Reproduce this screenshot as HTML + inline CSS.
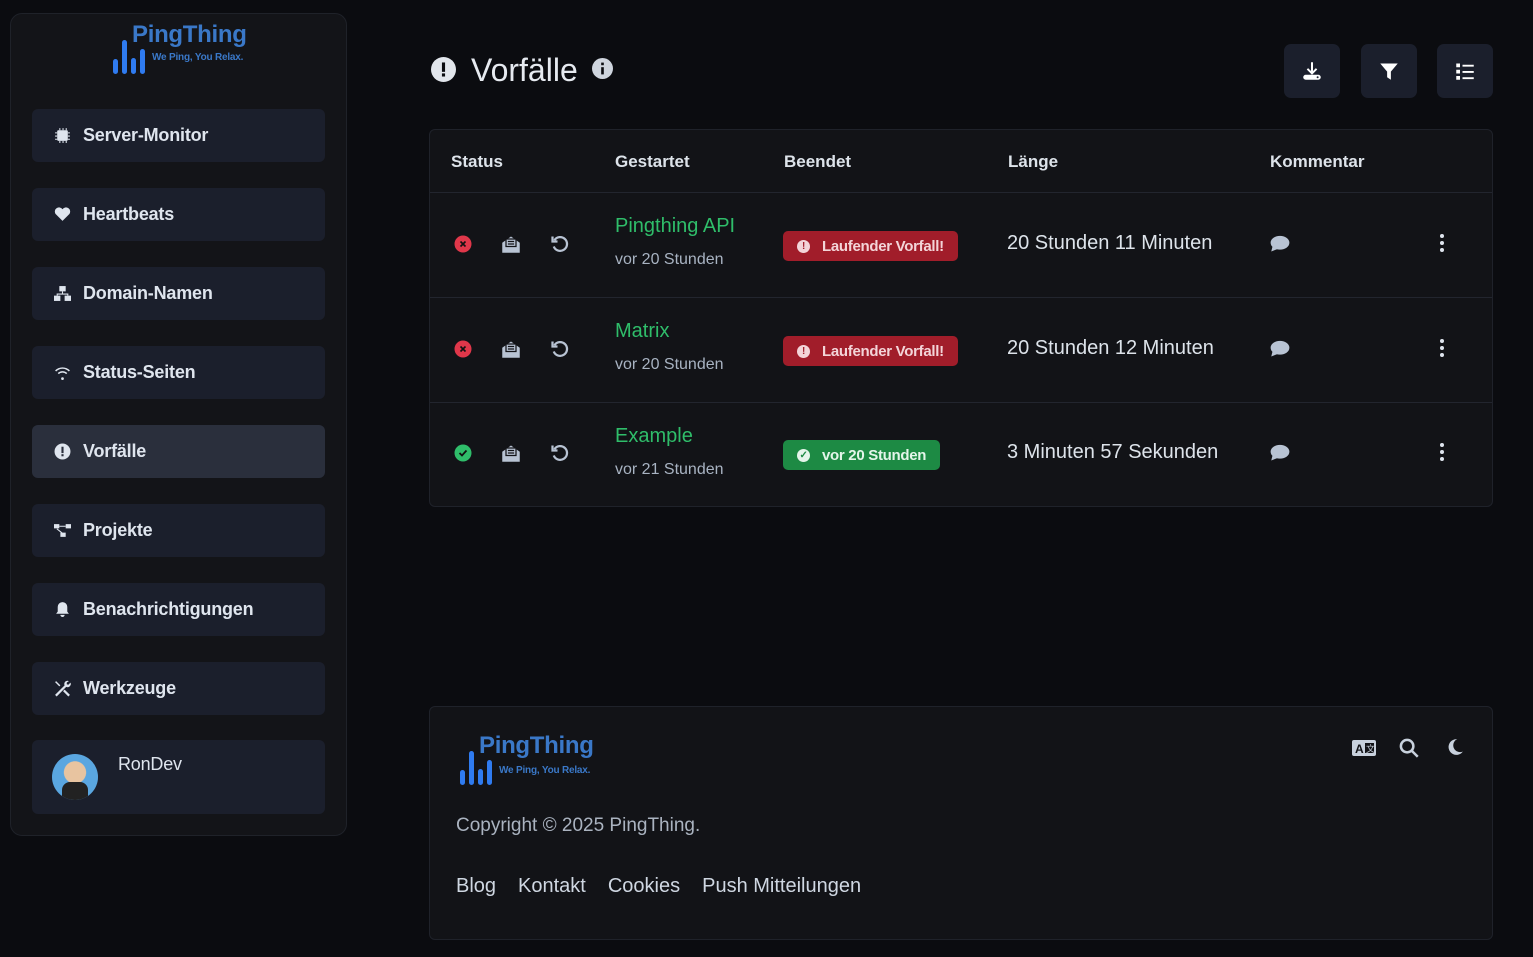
<!DOCTYPE html>
<html><head><meta charset="utf-8"><style>
*{box-sizing:border-box;margin:0;padding:0}
body{width:1533px;height:957px;background:#0b0c10;font-family:"Liberation Sans",sans-serif;color:#dde3ea;position:relative;overflow:hidden}
.side{position:absolute;left:10px;top:13px;width:337px;height:823px;background:#131418;border:1px solid #1f2229;border-radius:12px}
.logo{position:absolute}
.logo .bar{position:absolute;bottom:0;width:5px;border-radius:3px;background:#2f7bf0}
.logo .t{position:absolute;color:#3a78c8;font-weight:bold;letter-spacing:-0.3px}
.logo .s{position:absolute;color:#3a78c8;font-weight:bold;white-space:nowrap;letter-spacing:-0.2px}
.nav{position:absolute;left:21px;width:293px;height:53px;background:#1b1f2c;border-radius:6px;display:flex;align-items:center;padding-left:22px;font-size:18px;font-weight:bold;color:#dfe5ee;letter-spacing:-0.2px}
.nav.act{background:#2a2f3c}
.nav svg{width:17px;height:17px;margin-right:12px;fill:#dfe5ee}
.btn{position:absolute;top:44px;width:56px;height:54px;background:#1b1f2c;border-radius:7px;display:flex;align-items:center;justify-content:center}
.table{position:absolute;left:429px;top:129px;width:1064px;height:378px;background:#121317;border:1px solid #1f222a;border-radius:6px}
.th{position:absolute;top:22px;font-weight:bold;font-size:17px}
.row{position:absolute;left:0;width:1062px;height:105px;border-top:1px solid #22252e}
.row>*{position:absolute}
.name{left:185px;top:22px;color:#2fbd6a;font-size:20px}
.ago{left:185px;top:58px;color:#a8b3c2;font-size:16px}
.badge{left:353px;top:38px;height:30px;border-radius:5px;background:#a11d2a;color:#f3d4d8;font-weight:bold;font-size:15px;display:flex;align-items:center;padding:0 14px;letter-spacing:-0.3px}
.badge.g{background:#1d8a44;color:#e4f5ea}
.badge i{display:inline-flex;align-items:center;justify-content:center;width:13px;height:13px;border-radius:50%;background:#f3d4d8;margin-right:12px;font-style:normal;font-size:10px;color:#a11d2a}
.dur{left:577px;top:39px;font-size:20px}
.foot{position:absolute;left:429px;top:706px;width:1064px;height:234px;background:#121317;border:1px solid #1f222a;border-radius:6px}
</style></head><body>
<div class="side">
 <div class="logo" style="left:102px;top:6px;width:140px;height:55px">
  <div class="bar" style="left:0;height:15px;bottom:1px"></div>
  <div class="bar" style="left:9px;height:34px;bottom:1px"></div>
  <div class="bar" style="left:18px;height:16px;bottom:1px"></div>
  <div class="bar" style="left:27px;height:25px;bottom:1px"></div>
  <div class="t" style="left:19px;top:1px;font-size:24px">PingThing</div>
  <div class="s" style="left:39px;top:32px;font-size:10px">We Ping, You Relax.</div>
 </div>
 <div class="nav" style="top:95px"><svg viewBox="0 0 16 16"><rect x="3" y="3" width="10" height="10" rx="1"/><path d="M5 1h1v2H5zM8 1h1v2H8zM11 1h1v2h-1zM5 13h1v2H5zM8 13h1v2H8zM11 13h1v2h-1zM1 5h2v1H1zM1 8h2v1H1zM1 11h2v1H1zM13 5h2v1h-2zM13 8h2v1h-2zM13 11h2v1h-2z"/></svg>Server-Monitor</div>
 <div class="nav" style="top:174px"><svg viewBox="0 0 16 16"><path d="M8 14L1.5 7.5A3.5 3.5 0 0 1 8 3a3.5 3.5 0 0 1 6.5 4.5z"/></svg>Heartbeats</div>
 <div class="nav" style="top:253px"><svg viewBox="0 0 16 16"><rect x="5" y="1" width="6" height="5"/><rect x="0" y="10" width="6" height="5"/><rect x="10" y="10" width="6" height="5"/><path d="M7.5 6h1v2h5v2h-1V9h-9v1h-1V8h5z"/></svg>Domain-Namen</div>
 <div class="nav" style="top:332px"><svg viewBox="0 0 16 16"><path d="M8 12.5a1.3 1.3 0 1 1 0 2.6 1.3 1.3 0 0 1 0-2.6zM1 6a10 10 0 0 1 14 0l-1 1A8.5 8.5 0 0 0 2 7zM3.5 8.5a6.5 6.5 0 0 1 9 0l-1 1a5 5 0 0 0-7 0z"/></svg>Status-Seiten</div>
 <div class="nav act" style="top:411px"><svg viewBox="0 0 16 16"><circle cx="8" cy="8" r="7.5"/><rect x="7" y="3.5" width="2" height="6" fill="#2a2f3c"/><rect x="7" y="10.5" width="2" height="2" fill="#2a2f3c"/></svg>Vorfälle</div>
 <div class="nav" style="top:490px"><svg viewBox="0 0 16 16"><rect x="0" y="2" width="5" height="4"/><rect x="11" y="2" width="5" height="4"/><rect x="6" y="10" width="5" height="4"/><path d="M5 3.5h6v1H5zM3 6l5 4-.6.8-5-4z"/></svg>Projekte</div>
 <div class="nav" style="top:569px"><svg viewBox="0 0 16 16"><path d="M8 1a4.5 4.5 0 0 1 4.5 4.5V10l1.5 2H2l1.5-2V5.5A4.5 4.5 0 0 1 8 1zM6 13h4a2 2 0 0 1-4 0z"/></svg>Benachrichtigungen</div>
 <div class="nav" style="top:648px"><svg viewBox="0 0 16 16"><path d="M2 1l4 4-1 1-4-4zM10 9l5 5-1.5 1.5-5-5zM14 1a3 3 0 0 0-4 4L1 14l1.5 1.5L11.5 6.5a3 3 0 0 0 4-4L13.5 4.5 12 4V2.5z"/></svg>Werkzeuge</div>
 <div class="nav" style="top:726px;height:74px;align-items:flex-start;padding-top:14px">
  <div style="position:absolute;left:20px;top:14px;width:46px;height:46px;border-radius:50%;overflow:hidden;background:radial-gradient(circle at 50% 40%,#e8c4a0 0 30%,#5aa6e0 32%)"><div style="position:absolute;left:10px;top:28px;width:26px;height:20px;background:#222;border-radius:8px 8px 0 0"></div></div>
  <span style="margin-left:64px;font-weight:normal">RonDev</span></div>
</div>

<svg style="position:absolute;left:431px;top:57px" width="25" height="25" viewBox="0 0 16 16"><circle cx="8" cy="8" r="8" fill="#e2e6ec"/><rect x="7" y="3.5" width="2" height="6" fill="#0b0c10"/><rect x="7" y="10.5" width="2" height="2" fill="#0b0c10"/></svg>
<div style="position:absolute;left:471px;top:52px;font-size:32px;color:#e6eaf0">Vorfälle</div>
<svg style="position:absolute;left:592px;top:58px" width="21" height="21" viewBox="0 0 16 16"><circle cx="8" cy="8" r="8" fill="#cfd5de"/><rect x="7" y="7" width="2" height="5.5" fill="#0b0c10"/><rect x="7" y="3.5" width="2" height="2" fill="#0b0c10"/></svg>

<div class="btn" style="left:1284px"><svg width="20" height="20" viewBox="0 0 16 16" fill="#fff"><path d="M7.2 1h1.6v7l2.3-2.3 1.1 1.1L8 11 3.8 6.8l1.1-1.1L7.2 8z"/><rect x="1" y="11" width="14" height="4" rx="2"/><circle cx="12.5" cy="13" r=".8" fill="#1b1f2c"/></svg></div>
<div class="btn" style="left:1361px"><svg width="20" height="20" viewBox="0 0 16 16" fill="#fff"><path d="M1 2h14l-5.5 6.5V15l-3-2V8.5z"/></svg></div>
<div class="btn" style="left:1437px"><svg width="20" height="20" viewBox="0 0 16 16" fill="#fff"><rect x="1" y="2" width="3" height="3"/><rect x="1" y="7" width="3" height="3"/><rect x="1" y="12" width="3" height="3"/><rect x="6" y="3" width="9" height="1.5"/><rect x="6" y="8" width="9" height="1.5"/><rect x="6" y="13" width="9" height="1.5"/></svg></div>

<div class="table">
 <div class="th" style="left:21px">Status</div>
 <div class="th" style="left:185px">Gestartet</div>
 <div class="th" style="left:354px">Beendet</div>
 <div class="th" style="left:578px">Länge</div>
 <div class="th" style="left:840px">Kommentar</div>
 <div class="row" style="top:62px">
  <svg style="left:24px;top:42px" width="18" height="18"><circle cx="9" cy="9" r="8.5" fill="#e0374a"/><path d="M6.5 6.5l5 5M11.5 6.5l-5 5" stroke="#111" stroke-width="1.6"/></svg>
  <svg style="left:71px;top:41px" width="20" height="20" viewBox="0 0 16 16" fill="#b8c3d3"><path d="M1 7l7-5 7 5v8H1z"/><rect x="4" y="4" width="8" height="6" stroke="#121317"/><path d="M5.5 6h5M5.5 8h5" stroke="#121317"/></svg>
  <svg style="left:120px;top:41px" width="20" height="20" viewBox="0 0 16 16" fill="none" stroke="#b8c3d3" stroke-width="1.8"><path d="M3.5 5A5.5 5.5 0 1 1 3 10"/><path d="M2 2v4h4"/></svg>
  <div class="name">Pingthing API</div><div class="ago">vor 20 Stunden</div>
  <div class="badge"><i>!</i>Laufender Vorfall!</div>
  <div class="dur">20 Stunden 11 Minuten</div>
  <svg style="left:840px;top:42px" width="20" height="18" viewBox="0 0 16 14" fill="#b8c3d3"><ellipse cx="8" cy="6" rx="7.5" ry="5.5"/><path d="M2 9L1 13 6 11z"/></svg>
  <svg style="left:1008px;top:40px" width="8" height="20"><circle cx="4" cy="3" r="2" fill="#dfe5ee"/><circle cx="4" cy="10" r="2" fill="#dfe5ee"/><circle cx="4" cy="17" r="2" fill="#dfe5ee"/></svg>
 </div>
 <div class="row" style="top:167px">
  <svg style="left:24px;top:42px" width="18" height="18"><circle cx="9" cy="9" r="8.5" fill="#e0374a"/><path d="M6.5 6.5l5 5M11.5 6.5l-5 5" stroke="#111" stroke-width="1.6"/></svg>
  <svg style="left:71px;top:41px" width="20" height="20" viewBox="0 0 16 16" fill="#b8c3d3"><path d="M1 7l7-5 7 5v8H1z"/><rect x="4" y="4" width="8" height="6" stroke="#121317"/><path d="M5.5 6h5M5.5 8h5" stroke="#121317"/></svg>
  <svg style="left:120px;top:41px" width="20" height="20" viewBox="0 0 16 16" fill="none" stroke="#b8c3d3" stroke-width="1.8"><path d="M3.5 5A5.5 5.5 0 1 1 3 10"/><path d="M2 2v4h4"/></svg>
  <div class="name">Matrix</div><div class="ago">vor 20 Stunden</div>
  <div class="badge"><i>!</i>Laufender Vorfall!</div>
  <div class="dur">20 Stunden 12 Minuten</div>
  <svg style="left:840px;top:42px" width="20" height="18" viewBox="0 0 16 14" fill="#b8c3d3"><ellipse cx="8" cy="6" rx="7.5" ry="5.5"/><path d="M2 9L1 13 6 11z"/></svg>
  <svg style="left:1008px;top:40px" width="8" height="20"><circle cx="4" cy="3" r="2" fill="#dfe5ee"/><circle cx="4" cy="10" r="2" fill="#dfe5ee"/><circle cx="4" cy="17" r="2" fill="#dfe5ee"/></svg>
 </div>
 <div class="row" style="top:272px">
  <svg style="left:24px;top:41px" width="18" height="18"><circle cx="9" cy="9" r="8.5" fill="#2fbd6a"/><path d="M5.5 9l2.5 2.5 4.5-5" stroke="#111" stroke-width="1.8" fill="none"/></svg>
  <svg style="left:71px;top:40px" width="20" height="20" viewBox="0 0 16 16" fill="#b8c3d3"><path d="M1 7l7-5 7 5v8H1z"/><rect x="4" y="4" width="8" height="6" stroke="#121317"/><path d="M5.5 6h5M5.5 8h5" stroke="#121317"/></svg>
  <svg style="left:120px;top:40px" width="20" height="20" viewBox="0 0 16 16" fill="none" stroke="#b8c3d3" stroke-width="1.8"><path d="M3.5 5A5.5 5.5 0 1 1 3 10"/><path d="M2 2v4h4"/></svg>
  <div class="name">Example</div><div class="ago">vor 21 Stunden</div>
  <div class="badge g" style="top:37px"><i style="background:#e4f5ea;color:#1d8a44">✓</i>vor 20 Stunden</div>
  <div class="dur" style="top:38px">3 Minuten 57 Sekunden</div>
  <svg style="left:840px;top:41px" width="20" height="18" viewBox="0 0 16 14" fill="#b8c3d3"><ellipse cx="8" cy="6" rx="7.5" ry="5.5"/><path d="M2 9L1 13 6 11z"/></svg>
  <svg style="left:1008px;top:39px" width="8" height="20"><circle cx="4" cy="3" r="2" fill="#dfe5ee"/><circle cx="4" cy="10" r="2" fill="#dfe5ee"/><circle cx="4" cy="17" r="2" fill="#dfe5ee"/></svg>
 </div>
</div>

<div class="foot">
 <div class="logo" style="left:30px;top:26px;width:140px;height:52px">
  <div class="bar" style="left:0;height:15px"></div>
  <div class="bar" style="left:9px;height:34px"></div>
  <div class="bar" style="left:18px;height:16px"></div>
  <div class="bar" style="left:27px;height:25px"></div>
  <div class="t" style="left:19px;top:-1px;font-size:24px">PingThing</div>
  <div class="s" style="left:39px;top:32px;font-size:10px">We Ping, You Relax.</div>
 </div>
 <svg style="position:absolute;left:922px;top:33px" width="24" height="16" viewBox="0 0 24 16"><rect width="24" height="16" rx="2" fill="#c8d1dd"/><text x="3" y="13" font-family="Liberation Sans" font-weight="bold" font-size="12" fill="#121317">A</text><rect x="13" y="3" width="9" height="10" fill="#121317"/><text x="14" y="12" font-family="Noto Sans CJK SC" font-size="9" fill="#c8d1dd">文</text></svg>
 <svg style="position:absolute;left:969px;top:31px" width="20" height="20" viewBox="0 0 16 16" fill="none" stroke="#c8d1dd" stroke-width="2"><circle cx="6.5" cy="6.5" r="5"/><path d="M10 10l5 5"/></svg>
 <svg style="position:absolute;left:1016px;top:31px" width="18" height="18" viewBox="0 0 16 16"><path d="M10 1a7 7 0 1 0 5 11A6 6 0 0 1 10 1z" fill="#c8d1dd"/></svg>
 <div style="position:absolute;left:26px;top:108px;font-size:19px;color:#aab3c0">Copyright © 2025 PingThing.</div>
 <div style="position:absolute;left:26px;top:168px;font-size:20px;color:#cfd7e2">Blog<span style="margin-left:22px">Kontakt</span><span style="margin-left:22px">Cookies</span><span style="margin-left:22px">Push Mitteilungen</span></div>
</div>
</body></html>
